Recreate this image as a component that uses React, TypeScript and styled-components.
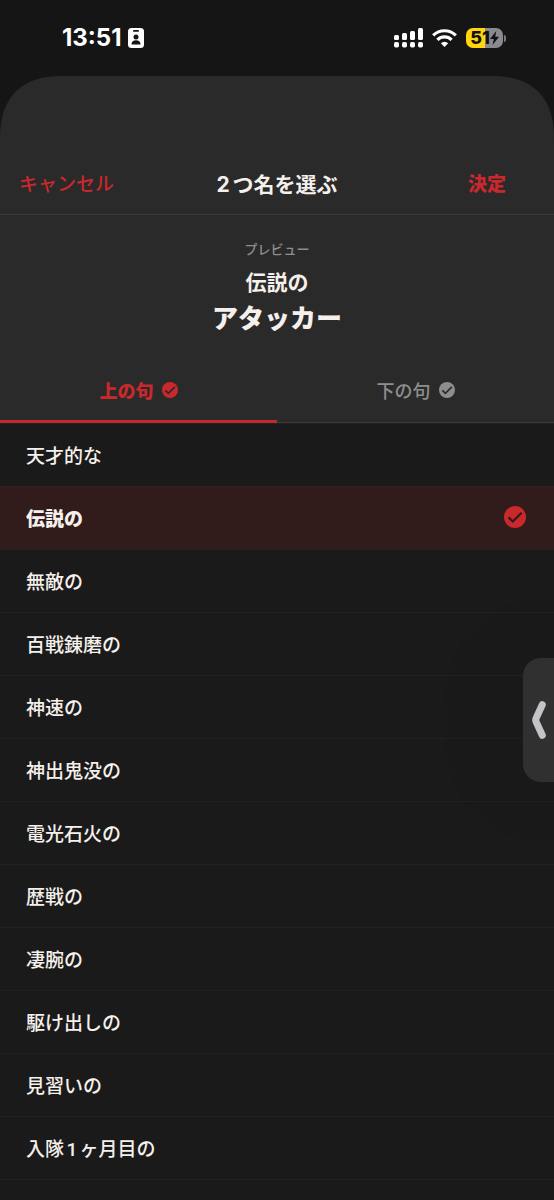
import React, { useState } from "react";
import styled, { createGlobalStyle } from "styled-components";

const GlobalStyle = createGlobalStyle`
  *, *::before, *::after { box-sizing: border-box; }
  html { height: 100%; overflow: hidden; }
  body {
    height: 100%;
    margin: 0;
    overflow: hidden;
    background: #1a1a1a;
    color: #f5f0eb;
    font-family: Inter, "Noto Sans CJK JP", sans-serif;
    text-autospace: normal;
  }
  #root { height: 100%; }
  button {
    margin: 0;
    padding: 0;
    border: 0;
    background: none;
    color: inherit;
    font: inherit;
    cursor: pointer;
  }
`;

const Screen = styled.div`
  height: 100%;
  display: flex;
  flex-direction: column;
  background: #151515;
`;

const StatusBar = styled.header`
  flex: none;
  display: flex;
  align-items: center;
  justify-content: space-between;
  height: 76px;
  padding: 0 48px 0 62px;
  color: #ffffff;
`;

const StatusGroup = styled.div<{ $gap: number }>`
  display: flex;
  align-items: center;
  gap: ${(p) => p.$gap}px;
`;

const Clock = styled.time`
  font-size: 24px;
  line-height: 28px;
  font-weight: 700;
`;

const Battery = styled.div`
  display: flex;
  align-items: center;
  gap: 1px;
`;

const BatteryBody = styled.div`
  display: flex;
  align-items: center;
  justify-content: center;
  width: 37px;
  height: 20px;
  border-radius: 7px;
  background: linear-gradient(90deg, #ffd60a 51%, #8a8a8e 51%);
  color: #111111;
  font-size: 18px;
  line-height: 20px;
  font-weight: 800;
`;

const BatteryTip = styled.div`
  width: 2px;
  height: 7px;
  border-radius: 0 2px 2px 0;
  background: #7a7a7e;
`;

const Sheet = styled.main`
  flex: 1;
  min-height: 0;
  display: flex;
  flex-direction: column;
  overflow: hidden;
  border-radius: 64px 64px 0 0;
  corner-shape: superellipse(1.3);
  background: #1a1a1a;
`;

const SheetTop = styled.div`
  flex: none;
  background: #2a2a2a;
`;

const NavBar = styled.div`
  display: grid;
  grid-template-columns: 1fr auto 1fr;
  align-items: center;
  padding: 94px 48px 14px 19px;
  border-bottom: 1px solid #3a3a3a;
  line-height: 30px;
`;

const NavAction = styled.button<{ $strong?: boolean }>`
  justify-self: ${(p) => (p.$strong ? "end" : "start")};
  color: #c9282d;
  font-size: 19px;
  font-weight: ${(p) => (p.$strong ? 900 : 500)};
`;

const Title = styled.h1`
  margin: 0 0 0 29px;
  font-size: 21px;
  font-weight: 700;
`;

const Preview = styled.section`
  display: flex;
  flex-direction: column;
  align-items: center;
  padding: 24px 0;
`;

const PreviewLabel = styled.p`
  margin: 0;
  color: #8e8e8e;
  font-size: 13px;
  line-height: 20px;
  font-weight: 500;
`;

const PreviewUpper = styled.p`
  margin: 8px 0 0;
  font-size: 21px;
  line-height: 32px;
  font-weight: 700;
`;

const PreviewLower = styled.p`
  margin: 0;
  font-size: 26px;
  line-height: 40px;
  font-weight: 900;
`;

const Tabs = styled.div`
  display: flex;
`;

const Tab = styled.button<{ $active: boolean }>`
  flex: 1;
  display: flex;
  align-items: center;
  justify-content: center;
  gap: 8px;
  height: 60px;
  border-bottom: ${(p) => (p.$active ? "3px solid #c4282d" : "1px solid #3a3a3a")};
  padding-bottom: ${(p) => (p.$active ? 3 : 5)}px;
  color: ${(p) => (p.$active ? "#c9282d" : "#8e8e8e")};
  font-size: 18px;
  font-weight: ${(p) => (p.$active ? 900 : 500)};
`;

const Options = styled.ul`
  flex: 1;
  min-height: 0;
  overflow: hidden;
  margin: 0;
  padding: 0;
  list-style: none;

  li:last-child {
    border-bottom: 1px solid #212121;
  }
`;

const Option = styled.button<{ $selected: boolean }>`
  display: flex;
  align-items: center;
  justify-content: space-between;
  width: 100%;
  height: 63px;
  padding: 0 28px 2px 26px;
  border-top: 1px solid ${(p) => (p.$selected ? "#342020" : "#212121")};
  background: ${(p) => (p.$selected ? "#321b1b" : "transparent")};
  font-family: Roboto, "Noto Sans CJK JP", sans-serif;
  font-size: 19px;
  font-weight: ${(p) => (p.$selected ? 900 : 500)};
  text-align: left;
`;

const CheckIcon = styled.svg`
  flex: none;
  display: block;
`;

const SelectedMark = styled.span`
  color: #c9282d;
`;

const EdgeHandle = styled.button`
  position: fixed;
  right: 0;
  top: 60%;
  transform: translateY(-50%);
  display: flex;
  align-items: center;
  justify-content: flex-end;
  width: 31px;
  height: 124px;
  padding-right: 8px;
  border-radius: 18px 0 0 18px;
  background: #303030;
  box-shadow: 0 0 90px rgba(0, 0, 0, 0.15);
`;

function Check({ size, mark }: { size: number; mark: string }) {
  return (
    <CheckIcon width={size} height={size} viewBox="0 0 22 22" aria-hidden="true">
      <circle cx="11" cy="11" r="11" fill="currentColor" />
      <path d="M4.6 11.4 8.8 15.5 17.6 6.8" fill="none" stroke={mark} strokeWidth="2.3" />
    </CheckIcon>
  );
}

function FocusBadge() {
  return (
    <svg width="16" height="20" viewBox="0 0 16 20" aria-hidden="true">
      <rect width="16" height="20" rx="3.5" fill="#fff" />
      <rect x="5" y="2" width="6" height="1.8" rx=".9" fill="#151515" />
      <circle cx="8" cy="9" r="2.5" fill="#151515" />
      <path d="M3.5 16.5c0-2.8 1.9-4.2 4.5-4.2s4.5 1.4 4.5 4.2z" fill="#151515" />
    </svg>
  );
}

function Signal() {
  return (
    <svg width="29" height="20" viewBox="0 0 29 20" fill="#fff" aria-hidden="true">
      <rect x="0" y="7" width="5" height="5" rx="1.5" />
      <rect x="8" y="5" width="5" height="7" rx="1.5" />
      <rect x="16" y="3" width="5" height="9" rx="1.5" />
      <rect x="24" y="0" width="5" height="12" rx="1.5" />
      {[0, 8, 16, 24].map((x) => (
        <rect key={x} x={x} y="14" width="5" height="5.5" rx="1.7" />
      ))}
    </svg>
  );
}

function Wifi() {
  return (
    <svg width="25" height="18" viewBox="0 0 25 18" aria-hidden="true">
      <g fill="none" stroke="#fff" strokeWidth="3.2">
        <path d="M1.2 6.4a16 16 0 0 1 22.6 0" />
        <path d="M5.4 10.8a10 10 0 0 1 14.2 0" />
      </g>
      <path d="M12.5 18 8.8 14.2a5.3 5.3 0 0 1 7.4 0z" fill="#fff" />
    </svg>
  );
}

function Bolt() {
  return (
    <svg width="9" height="14" viewBox="0 0 9 14" aria-hidden="true">
      <path d="M6.3 0 0 8h3.8L2.6 14 9 5.8H5.2z" fill="#111" />
    </svg>
  );
}

const upperPhrases = [
  "天才的な",
  "伝説の",
  "無敵の",
  "百戦錬磨の",
  "神速の",
  "神出鬼没の",
  "電光石火の",
  "歴戦の",
  "凄腕の",
  "駆け出しの",
  "見習いの",
  "入隊1ヶ月目の",
];

export default function App() {
  const [selected, setSelected] = useState("伝説の");
  const [tab, setTab] = useState(0);

  return (
    <Screen lang="ja">
      <GlobalStyle />
      <StatusBar>
        <StatusGroup $gap={6}>
          <Clock>13:51</Clock>
          <FocusBadge />
        </StatusGroup>
        <StatusGroup $gap={9}>
          <Signal />
          <Wifi />
          <Battery>
            <BatteryBody>
              51
              <Bolt />
            </BatteryBody>
            <BatteryTip />
          </Battery>
        </StatusGroup>
      </StatusBar>
      <Sheet>
        <SheetTop>
          <NavBar>
            <NavAction>キャンセル</NavAction>
            <Title>2つ名を選ぶ</Title>
            <NavAction $strong>決定</NavAction>
          </NavBar>
          <Preview>
            <PreviewLabel>プレビュー</PreviewLabel>
            <PreviewUpper>{selected}</PreviewUpper>
            <PreviewLower>アタッカー</PreviewLower>
          </Preview>
          <Tabs role="tablist">
            {["上の句", "下の句"].map((label, i) => (
              <Tab
                key={label}
                role="tab"
                aria-selected={tab === i}
                $active={tab === i}
                onClick={() => setTab(i)}
              >
                {label}
                <Check size={16} mark="#2a2a2a" />
              </Tab>
            ))}
          </Tabs>
        </SheetTop>
        <Options>
          {upperPhrases.map((phrase) => (
            <li key={phrase}>
              <Option
                aria-pressed={phrase === selected}
                $selected={phrase === selected}
                onClick={() => setSelected(phrase)}
              >
                {phrase}
                {phrase === selected && (
                  <SelectedMark>
                    <Check size={22} mark="#321b1b" />
                  </SelectedMark>
                )}
              </Option>
            </li>
          ))}
        </Options>
      </Sheet>
      <EdgeHandle aria-label="パネルを開く">
        <svg width="14" height="38" viewBox="0 0 14 38" aria-hidden="true">
          <path
            d="M10.3 3.7 4.2 17q-1 2 0 4l6.1 13.3"
            fill="none"
            stroke="#c4c3c8"
            strokeWidth="7"
            strokeLinecap="round"
            strokeLinejoin="round"
          />
        </svg>
      </EdgeHandle>
    </Screen>
  );
}
